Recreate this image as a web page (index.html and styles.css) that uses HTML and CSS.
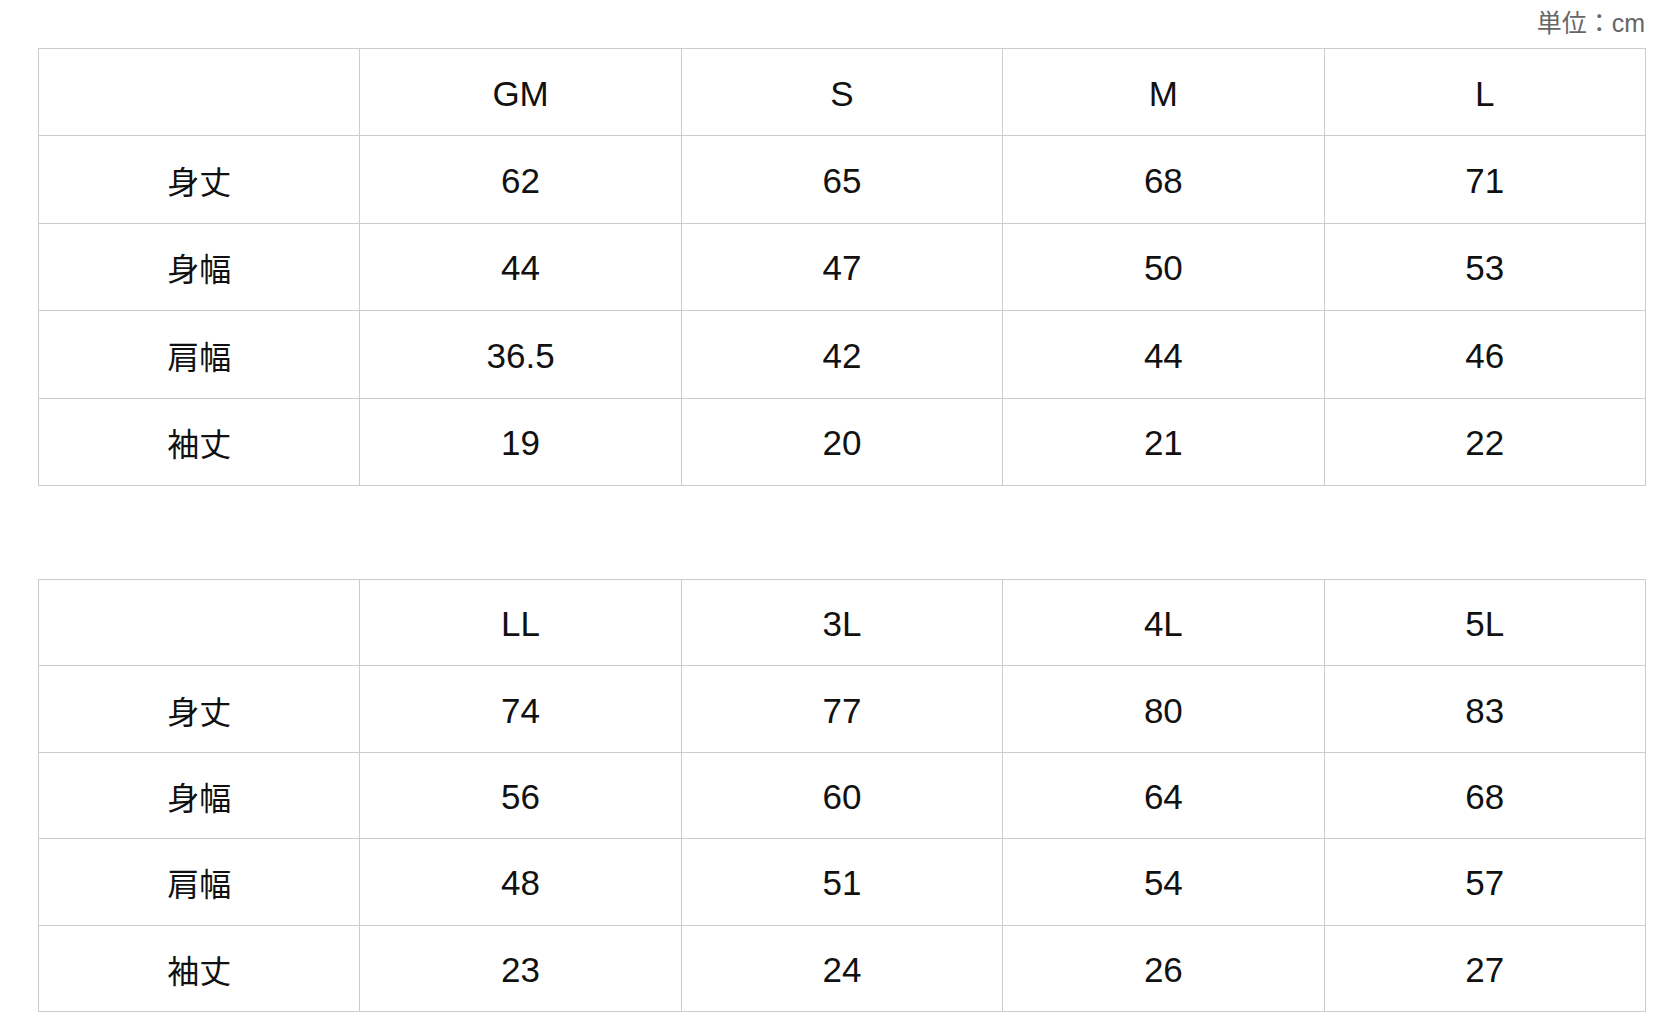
FILE: index.html
```html
<!DOCTYPE html>
<html lang="ja">
<head>
<meta charset="utf-8">
<link rel="stylesheet" href="styles.css">
</head>
<body>
<div class="wrap">
  <div class="unit">単位：cm</div>
  <table class="size">
    <tr><th></th><th>GM</th><th>S</th><th>M</th><th>L</th></tr>
    <tr><th>身丈</th><td>62</td><td>65</td><td>68</td><td>71</td></tr>
    <tr><th>身幅</th><td>44</td><td>47</td><td>50</td><td>53</td></tr>
    <tr><th>肩幅</th><td>36.5</td><td>42</td><td>44</td><td>46</td></tr>
    <tr><th>袖丈</th><td>19</td><td>20</td><td>21</td><td>22</td></tr>
  </table>
  <table class="size second">
    <tr><th></th><th>LL</th><th>3L</th><th>4L</th><th>5L</th></tr>
    <tr><th>身丈</th><td>74</td><td>77</td><td>80</td><td>83</td></tr>
    <tr><th>身幅</th><td>56</td><td>60</td><td>64</td><td>68</td></tr>
    <tr><th>肩幅</th><td>48</td><td>51</td><td>54</td><td>57</td></tr>
    <tr><th>袖丈</th><td>23</td><td>24</td><td>26</td><td>27</td></tr>
  </table>
</div>
</body>
</html>
```
FILE: styles.css
```css
html, body {
  margin: 0;
  padding: 0;
  background: #fff;
}
body {
  font-family: "Liberation Sans", "Noto Sans CJK JP", sans-serif;
  color: #111;
}
.wrap {
  padding: 0 30px 0 38px;
}
.unit {
  text-align: right;
  font-size: 25px;
  color: #666;
  line-height: 46px;
  height: 48px;
  padding-right: 1px;
}
.size {
  width: 100%;
  border-collapse: collapse;
  table-layout: fixed;
}
.size th, .size td {
  border: 1px solid #cccccc;
  height: 87.4px;
  padding: 3px 0 0;
  box-sizing: border-box;
  text-align: center;
  vertical-align: middle;
  font-weight: normal;
  font-size: 35px;
}
.size th {
  font-size: 32px;
  padding-top: 1px;
}
.size tr:first-child th {
  font-size: 35px;
  padding-top: 3px;
}
.second {
  margin-top: 93px;
}
.second th, .second td {
  height: 86.4px;
}
```
